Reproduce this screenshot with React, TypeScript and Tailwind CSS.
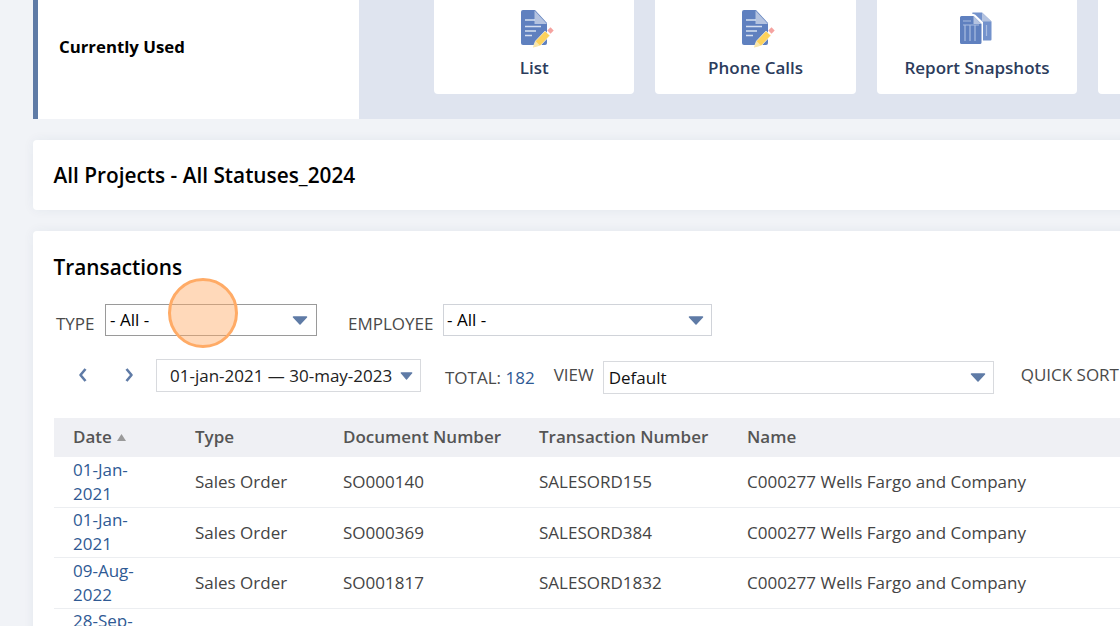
const rows = [
  { date: '01-Jan-2021', doc: 'SO000140', txn: 'SALESORD155' },
  { date: '01-Jan-2021', doc: 'SO000369', txn: 'SALESORD384' },
  { date: '09-Aug-2022', doc: 'SO001817', txn: 'SALESORD1832' },
  { date: '28-Sep-2022', doc: 'SO002093', txn: 'SALESORD2108' },
];

function DocIcon() {
  return (
    <svg width="33" height="38" viewBox="0 0 33 38" className="block ml-[6px]">
      <path d="M2 0h12l12 13v20a2 2 0 0 1-2 2H2a2 2 0 0 1-2-2V2a2 2 0 0 1 2-2z" fill="#5f80bf" />
      <path d="M13.500 .5L26 14H13.500z" fill="#b4c3e0" />
      <path d="M4 10h10M4 16.500h16M4 21h11M4 25.500h7" stroke="#d5dff0" strokeWidth="1.300" fill="none" />
      <path d="M29.500 17.300l3.200 3.200-3.200 3.200-3.200-3.200z" fill="#f5a3a0" />
      <path d="M12 37.500l2.500-6.500 9.500-10 5 4.500-9.500 10z" fill="#fdd25c" stroke="#fff" strokeWidth="0.600" />
      <path d="M12 37.500l2.500-6.500 4.500 4.500z" fill="#f8e6ac" />
    </svg>
  );
}

function SnapshotIcon() {
  return (
    <svg width="33" height="33" viewBox="0 0 33 33" className="block">
      <path d="M12 1.500a1 1 0 0 1 1-1h9l9.500 9v18a1 1 0 0 1-1 1H23V10L15 2.500z" fill="#7392cc" />
      <path d="M22 .5l9.500 9H22z" fill="#b4c3e0" />
      <path d="M1.500 4h12l8 8v18.500a1.500 1.500 0 0 1-1.500 1.500H1.500A1.500 1.500 0 0 1 0 30.500v-25A1.500 1.500 0 0 1 1.500 4z" fill="#5f80bf" />
      <path d="M13.500 4l8 8h-8z" fill="#b4c3e0" />
      <path d="M3 9h8M3 13h16M5 13v16M10 13v16M15 13v16" stroke="#a9bce0" strokeWidth="1.200" fill="none" />
      <path d="M26.500 13v11" stroke="#a9bce0" strokeWidth="1.200" />
    </svg>
  );
}

function Arrow({ small }: { small?: boolean }) {
  return (
    <svg width={small ? 13 : 16} height={small ? 8 : 9} viewBox="0 0 16 9" className="block shrink-0" preserveAspectRatio="none">
      <path d="M1.500 1h13L8 8z" fill="#5f7ba6" stroke="#5f7ba6" strokeWidth="1.500" strokeLinejoin="round" />
    </svg>
  );
}

function Tile({ label, icon }: { label: string; icon: React.ReactNode }) {
  return (
    <div className="w-[200.400px] h-[94px] shrink-0 bg-white rounded-b flex flex-col items-center">
      <div className="h-[47px] mt-[10px] flex items-start">{icon}</div>
      <div className="-mt-[1px] text-[17px] leading-[23px] font-semibold text-[#2c3c5c]">{label}</div>
    </div>
  );
}

export default function App() {
  return (
    <div className="w-[1120px] h-[626px] overflow-hidden bg-[#f1f3f7] pl-[33px] font-['Open_Sans',sans-serif]">
      <div className="w-[1300px]">
        {/* Top band */}
        <div className="flex h-[119px] bg-[#dfe4ef]">
          <div className="w-[325.500px] bg-white border-l-[5px] border-[#5f7ba6] pl-[21px] pt-[36px]">
            <div className="text-[16.800px] leading-[22px] font-bold text-black">Currently Used</div>
          </div>
          <div className="flex gap-[21px] pl-[75.500px]">
            <Tile label="List" icon={<DocIcon />} />
            <Tile label="Phone Calls" icon={<DocIcon />} />
            <Tile label="Report Snapshots" icon={<div className="mt-[2px]"><SnapshotIcon /></div>} />
            <Tile label="" icon={null} />
          </div>
        </div>

        <div className="mt-[21px] h-[70px] bg-white rounded flex items-center pl-[20.500px] shadow-[0_0_12px_rgba(40,60,100,0.06)]">
          <h1 className="text-[20.800px] leading-[28px] font-semibold text-black">All Projects - All Statuses_2024</h1>
        </div>

        {/* Transactions */}
        <div className="mt-[21px] h-[500px] bg-white rounded pt-[22px] pl-[21px] shadow-[0_0_12px_rgba(40,60,100,0.06)]">
          <h2 className="-ml-[0.500px] text-[20.800px] leading-[28px] font-semibold text-black">Transactions</h2>

          <div className="mt-[23px] flex h-[32px] text-[17px]">
            <span className="ml-[2px] w-[49px] mt-[8px] leading-[24px] text-[#4a4a4a]">TYPE</span>
            <div className="w-[212px] border border-[#9a9a9a] flex items-center justify-between pl-[4px] pr-[8px]">
              <span className="font-medium text-black -mt-[1px]">- All -</span>
              <Arrow />
            </div>
            <span className="ml-[31px] w-[95px] mt-[8px] leading-[24px] text-[#4a4a4a]">EMPLOYEE</span>
            <div className="w-[269px] border border-[#d0d3d9] flex items-center justify-between pl-[3px] pr-[7px]">
              <span className="font-medium text-black -mt-[1px]">- All -</span>
              <Arrow />
            </div>
          </div>

          <div className="mt-[23px] flex items-start h-[35px] text-[17px]">
            <svg width="10" height="16" viewBox="0 0 10 16" className="ml-[24px] mt-[8px]">
              <path d="M7.500 2L2.500 8l5 6" stroke="#5f7ba6" strokeWidth="2.600" fill="none" strokeLinejoin="round" />
            </svg>
            <svg width="10" height="16" viewBox="0 0 10 16" className="ml-[36px] mt-[8px]">
              <path d="M2.500 2l5 6-5 6" stroke="#5f7ba6" strokeWidth="2.600" fill="none" strokeLinejoin="round" />
            </svg>
            <div className="ml-[22px] w-[265px] h-[33px] border border-[#d8dade] flex items-center pl-[13px] pr-[7px] justify-between">
              <span className="text-[#222] font-medium whitespace-nowrap">01-jan-2021 — 30-may-2023</span>
              <Arrow small />
            </div>
            <span className="ml-[24px] mt-[7px] leading-[24px] text-[#4a4a4a] whitespace-nowrap">
              TOTAL: <span className="text-[#2f5a94]">182</span>
            </span>
            <span className="ml-[19px] mt-[4px] leading-[24px] text-[#4a4a4a]">VIEW</span>
            <div className="ml-[9px] mt-[2px] w-[391px] h-[33px] border border-[#d8dade] flex items-center pl-[5px] pr-[7px] justify-between">
              <span className="font-medium text-[#111]">Default</span>
              <Arrow />
            </div>
            <span className="ml-[27px] mt-[4px] leading-[24px] text-[#4a4a4a] whitespace-nowrap">QUICK SORT</span>
          </div>

          {/* Table */}
          <div className="mt-[24px] text-[17px] text-[#444]">
            <div className="h-[39px] pb-[1px] bg-[#eff0f4] flex items-center font-semibold text-[#555]">
              <div className="w-[141px] pl-[19px] flex items-center gap-[5px]">
                Date
                <svg width="9" height="7" viewBox="0 0 9 7"><path d="M4.500 0L9 7H0z" fill="#9a9a9a" /></svg>
              </div>
              <div className="w-[148px]">Type</div>
              <div className="w-[196px]">Document Number</div>
              <div className="w-[208px]">Transaction Number</div>
              <div>Name</div>
            </div>
            {rows.map((r) => (
              <div key={r.doc} className="h-[50.500px] border-b border-[#eceef1] flex items-center">
                <div className="w-[141px] pl-[19px]">
                  <div className="w-[70px] leading-[24px] text-[#2f5a94]">{r.date}</div>
                </div>
                <div className="w-[148px]">Sales Order</div>
                <div className="w-[196px]">{r.doc}</div>
                <div className="w-[208px]">{r.txn}</div>
                <div>C000277 Wells Fargo and Company</div>
              </div>
            ))}
          </div>
        </div>
      </div>

      {/* Click marker */}
      <div className="absolute left-[168px] top-[278px] w-[70px] h-[70px] rounded-full border-[3px] border-[#ffab66] bg-[#ffab66]/45" />
    </div>
  );
}
